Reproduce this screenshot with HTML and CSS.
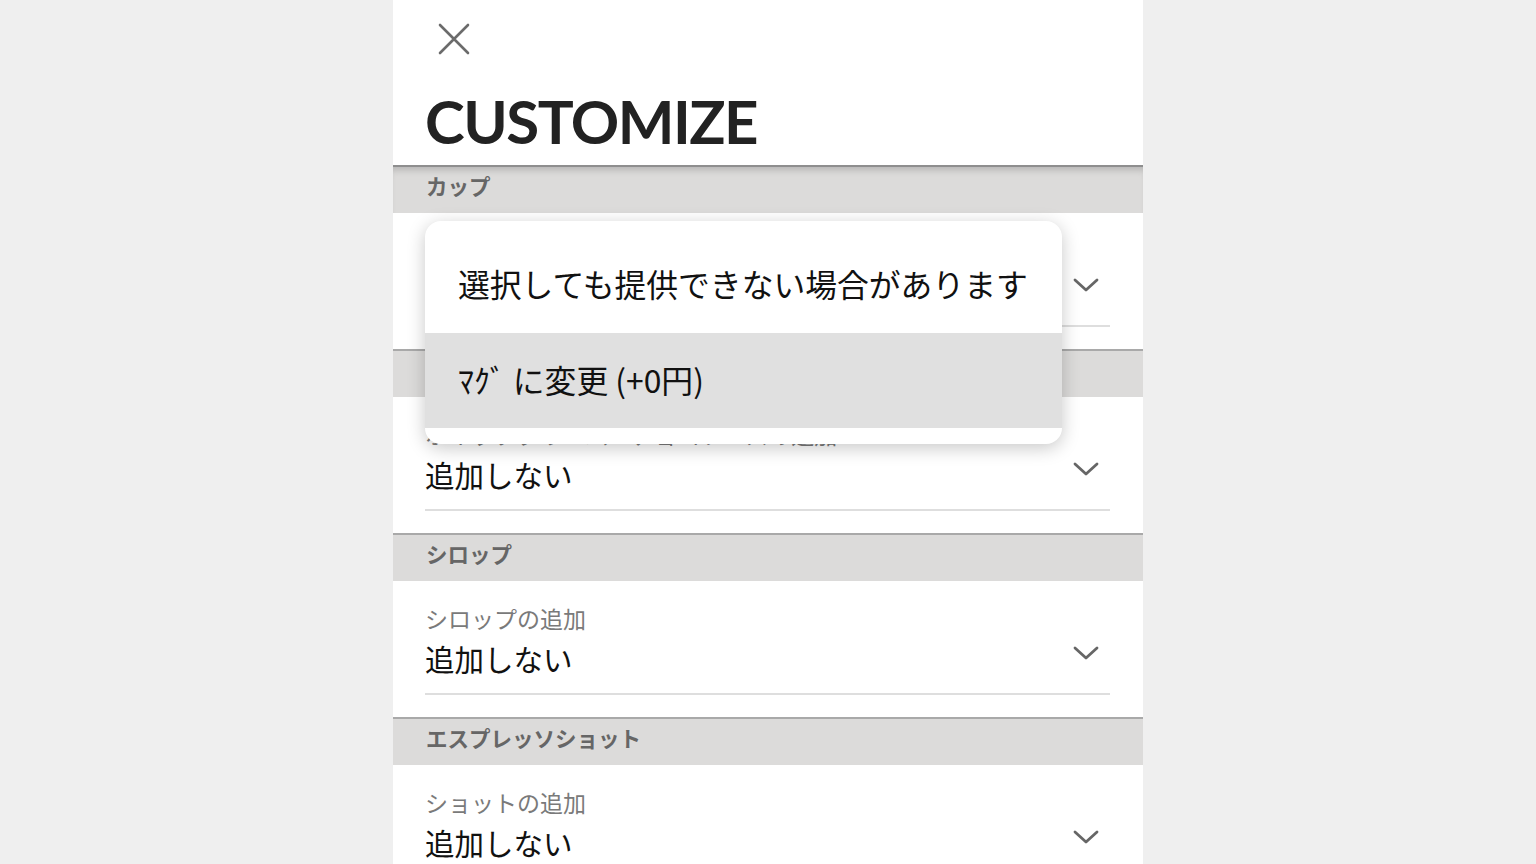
FILE: index.html
```html
<!DOCTYPE html>
<html lang="ja">
<head>
<meta charset="utf-8">
<title>CUSTOMIZE</title>
<link rel="stylesheet" href="styles.css">
</head>
<body>
<div class="panel">
  <div class="top">
    <button class="close" aria-label="close">
      <svg width="34" height="34" viewBox="0 0 34 34"><path d="M3 3 L31 31 M31 3 L3 31" stroke="#6b6b6b" stroke-width="2.6" fill="none" stroke-linecap="round"/></svg>
    </button>
    <h1 class="title">CUSTOMIZE</h1>
  </div>

  <div class="section-head first">カップ</div>
  <div class="field">
    <div class="label">カップの変更</div>
    <div class="value-row"><span class="value">変更しない</span><svg class="chev" width="26" height="14" viewBox="0 0 26 14"><path d="M2 2 L13 12 L24 2" stroke="#666" stroke-width="2.8" fill="none" stroke-linecap="round" stroke-linejoin="round"/></svg></div>
  </div>

  <div class="section-head">ホイップクリーム</div>
  <div class="field">
    <div class="label">ホイップクリーム・チョコソースの追加</div>
    <div class="value-row"><span class="value">追加しない</span><svg class="chev" width="26" height="14" viewBox="0 0 26 14"><path d="M2 2 L13 12 L24 2" stroke="#666" stroke-width="2.8" fill="none" stroke-linecap="round" stroke-linejoin="round"/></svg></div>
  </div>

  <div class="section-head">シロップ</div>
  <div class="field">
    <div class="label">シロップの追加</div>
    <div class="value-row"><span class="value">追加しない</span><svg class="chev" width="26" height="14" viewBox="0 0 26 14"><path d="M2 2 L13 12 L24 2" stroke="#666" stroke-width="2.8" fill="none" stroke-linecap="round" stroke-linejoin="round"/></svg></div>
  </div>

  <div class="section-head">エスプレッソショット</div>
  <div class="field">
    <div class="label">ショットの追加</div>
    <div class="value-row"><span class="value">追加しない</span><svg class="chev" width="26" height="14" viewBox="0 0 26 14"><path d="M2 2 L13 12 L24 2" stroke="#666" stroke-width="2.8" fill="none" stroke-linecap="round" stroke-linejoin="round"/></svg></div>
  </div>

  <div class="menu">
    <div class="menu-item note">選択しても提供できない場合があります</div>
    <div class="menu-item selected">ﾏｸﾞ に変更 (+0円)</div>
  </div>
</div>
</body>
</html>
```

FILE: styles.css
```css
html, body {
  margin: 0;
  padding: 0;
  height: 100%;
  overflow: hidden;
}
body {
  background: #efefef;
  font-family: "Noto Sans CJK JP", "Noto Sans", sans-serif;
}
.panel {
  position: relative;
  width: 750px;
  height: 864px;
  margin: 0 auto;
  background: #fff;
  overflow: hidden;
}
.top {
  height: 165px;
  box-sizing: border-box;
  padding: 22px 34px 0;
}
.close {
  display: block;
  border: 0;
  background: none;
  padding: 0;
  margin-left: 10px;
  width: 34px;
  height: 34px;
  cursor: pointer;
}
.title {
  margin: 30px 0 0 -2px;
  font-family: "Lato", "Noto Sans", sans-serif;
  font-weight: 700;
  font-size: 60px;
  line-height: 70px;
  letter-spacing: -1.5px;
  color: #222;
}
.section-head {
  height: 46px;
  border-top: 2px solid #a9a9a9;
  background: #dcdbda;
  box-sizing: content-box;
  padding: 0 33px;
  font-size: 21.5px;
  font-weight: 700;
  color: #666;
  line-height: 38px;
}
.section-head.first {
  border-top-color: #8e8e8e;
  box-shadow: inset 0 7px 7px -4px rgba(0,0,0,0.18);
}
.field {
  margin: 0 33px 22px 32px;
  padding-top: 21px;
  padding-bottom: 14px;
  border-bottom: 2px solid #dedede;
}
.label {
  font-size: 23px;
  line-height: 32px;
  color: #7a7a7a;
}
.value-row {
  display: flex;
  align-items: center;
  justify-content: space-between;
  margin-top: 3px;
}
.value {
  font-size: 29.5px;
  line-height: 42px;
  color: #111;
}
.chev {
  margin-right: 11px;
  margin-top: -10px;
}
.menu {
  position: absolute;
  left: 32px;
  top: 221px;
  width: 637px;
  height: 223px;
  background: #fff;
  border-radius: 16px;
  box-shadow: 0 4px 18px rgba(0,0,0,0.22);
  overflow: hidden;
}
.menu-item {
  padding: 0 33px;
  font-size: 31.8px;
  color: #111;
}
.menu-item.note {
  height: 112px;
  line-height: 124px;
}
.menu-item.selected {
  height: 95px;
  line-height: 93px;
  background: #e0e0e0;
}
```
